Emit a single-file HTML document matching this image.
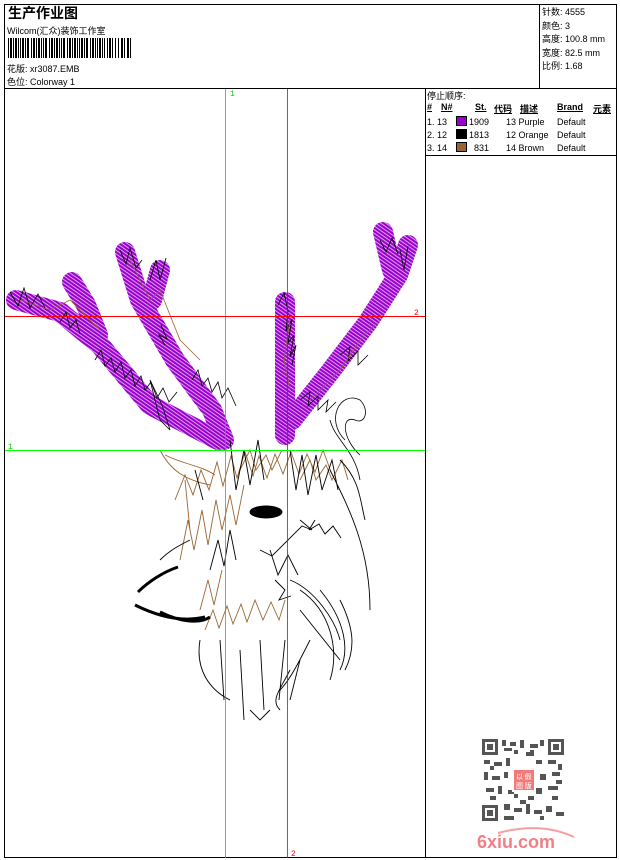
<!DOCTYPE html>
<html><head><meta charset="utf-8"><style>
html,body{margin:0;padding:0;background:#fff;width:620px;height:860px;overflow:hidden;font-family:"Liberation Sans","Noto Sans CJK SC",sans-serif;font-size:9px;color:#000}
.a{position:absolute;white-space:nowrap}
</style></head><body>
<svg width="620" height="860" style="position:absolute;left:0;top:0">
<defs>
<pattern id="h" width="3" height="3" patternUnits="userSpaceOnUse" patternTransform="rotate(35)">
<rect width="3" height="3" fill="#9b00d0"/><rect width="3" height="0.8" fill="#e9c8f5"/>
</pattern>
</defs>
<rect x="4.5" y="4.5" width="612" height="853" fill="none" stroke="#000"/>
<line x1="4" y1="88.5" x2="617" y2="88.5" stroke="#000"/>
<line x1="539.5" y1="4" x2="539.5" y2="88" stroke="#000"/>
<line x1="425.5" y1="88" x2="425.5" y2="858" stroke="#000"/>
<line x1="425" y1="155.5" x2="617" y2="155.5" stroke="#000"/>
<g fill="#000">
<rect x="8" y="38" width="1" height="20"/><rect x="10" y="38" width="2" height="20"/><rect x="13" y="38" width="1" height="20"/><rect x="15" y="38" width="2" height="20"/><rect x="18" y="38" width="1" height="20"/><rect x="20" y="38" width="1" height="20"/><rect x="22" y="38" width="2" height="20"/><rect x="25" y="38" width="1" height="20"/><rect x="27" y="38" width="2" height="20"/><rect x="31" y="38" width="1" height="20"/><rect x="33" y="38" width="2" height="20"/><rect x="36" y="38" width="1" height="20"/><rect x="38" y="38" width="2" height="20"/><rect x="41" y="38" width="1" height="20"/><rect x="43" y="38" width="1" height="20"/><rect x="45" y="38" width="2" height="20"/><rect x="49" y="38" width="1" height="20"/><rect x="51" y="38" width="2" height="20"/><rect x="54" y="38" width="1" height="20"/><rect x="56" y="38" width="2" height="20"/><rect x="59" y="38" width="1" height="20"/><rect x="61" y="38" width="1" height="20"/><rect x="63" y="38" width="2" height="20"/><rect x="67" y="38" width="1" height="20"/><rect x="69" y="38" width="2" height="20"/><rect x="72" y="38" width="1" height="20"/><rect x="74" y="38" width="2" height="20"/><rect x="77" y="38" width="1" height="20"/><rect x="79" y="38" width="1" height="20"/><rect x="81" y="38" width="2" height="20"/><rect x="84" y="38" width="1" height="20"/><rect x="86" y="38" width="2" height="20"/><rect x="90" y="38" width="1" height="20"/><rect x="92" y="38" width="2" height="20"/><rect x="95" y="38" width="1" height="20"/><rect x="97" y="38" width="1" height="20"/><rect x="99" y="38" width="2" height="20"/><rect x="102" y="38" width="1" height="20"/><rect x="104" y="38" width="1" height="20"/><rect x="107" y="38" width="1" height="20"/><rect x="109" y="38" width="2" height="20"/><rect x="112" y="38" width="1" height="20"/><rect x="115" y="38" width="1" height="20"/><rect x="118" y="38" width="1" height="20"/><rect x="121" y="38" width="2" height="20"/><rect x="124" y="38" width="1" height="20"/><rect x="127" y="38" width="2" height="20"/><rect x="130" y="38" width="1" height="20"/>
</g>
<rect x="456.5" y="116.5" width="10" height="9" fill="#9900cc" stroke="#000"/>
<rect x="456.5" y="129.5" width="10" height="9" fill="#000" stroke="#000"/>
<rect x="456.5" y="142.5" width="10" height="9" fill="#996633" stroke="#000"/>
<g stroke="url(#h)" stroke-linecap="round" stroke-linejoin="round" fill="none" stroke-width="20">
<polyline points="16,300 60,312 100,345 150,405 218,440"/>
<polyline points="72,282 86,305 98,335"/>
<polyline points="125,252 140,300 175,360 212,410 224,440"/>
<polyline points="160,270 152,300"/>
<polyline points="285,302 285,435"/>
<polyline points="292,420 330,372 368,322 398,275 408,245"/>
<polyline points="383,232 392,270"/>
</g>
<g stroke="#000" stroke-width="0.8" fill="none">
<path d="M10,292 l8,14 l6,-18 l6,20 l8,-14 l8,16 M60,322 l6,-10 l4,16 l6,-8 l4,14 M95,360 l6,-10 l4,16 l6,-8 l4,14 l6,-10 l4,16 l6,-8 l4,16 l6,-10 l4,14 l6,-8 l6,16 l6,-10 l6,14 l8,-10 M120,250 l6,14 l4,-16 l6,20 l6,-8 M150,280 l6,-20 l4,20 l6,-22 M165,345 l-6,-10 l8,4 l-6,-14 M192,380 l6,-10 l4,16 l6,-8 l4,14 l6,-10 l4,16 l6,-10 l8,18 M278,305 l6,-12 l4,18 l-2,20 l6,-12 l-4,24 l6,-8 l-4,22 l6,-12 l-4,20 M300,400 l10,-8 l-2,14 l10,-10 l0,14 l10,-10 l-2,12 l10,-10 M340,355 l10,-8 l-2,14 l10,-10 l0,14 l10,-10 M380,240 l6,12 l6,-14 l6,16 M400,250 l4,20 l4,-24"/>
<path stroke="#996633" d="M20,300 l30,10 l20,-10 l30,30 M130,260 l20,40 l10,-10 l20,50 l20,20 M290,320 l-6,40 l6,30 M310,400 l30,-30 l20,-30 l20,-20"/>
<path d="M150,380 l10,40 l10,10 l-8,-25 z"/>
<path d="M345,440 c-20,-20 -5,-50 15,-40 c10,10 5,25 -5,20 c-15,-5 -12,20 5,35 M330,420 c5,20 25,30 30,60"/>
</g>
<g fill="none" stroke-width="0.9">
<path stroke="#996633" d="M160,450 c10,20 25,30 50,35 M165,455 c20,10 35,10 50,20 M175,500 l10,-25 l8,20 l8,-25 l8,20 l8,-28 l6,24 l8,-30 l6,22 l8,-26 l8,24 l6,-20 l8,22 l8,-24 l8,20 l8,-22 l8,22 l8,-20 l8,18 l8,-22 l8,22 M185,480 l5,50 M180,560 l8,-40 l6,30 l8,-40 l6,35 l8,-45 l6,30 l8,-35 l6,30 l8,-40 M200,610 l8,-30 l6,25 l8,-35 M205,630 l8,-20 l6,18 l8,-22 l6,18 l8,-20 l6,18 l8,-22 l8,20 l8,-18 l8,18 l6,-20 M240,470 l10,-20 l6,20 l10,-15 l6,15 l10,-20 M300,480 l10,-20 l6,20 l10,-15 l6,15 l10,-20 l6,20"/>
<path stroke="#000" d="M195,470 l8,30 M230,440 l6,50 l8,-40 l6,35 l8,-45 l6,40 M290,450 l6,40 l6,-35 l6,40 l8,-40 l6,35 l10,-30 l6,30 M330,470 c20,40 40,80 40,140 M340,460 c20,20 20,40 25,60 M300,590 c30,20 40,60 30,90 M320,590 c25,30 30,60 20,80 M340,600 c15,30 15,50 5,70 M290,580 c25,10 45,40 50,60 M285,640 l-6,60 M260,640 l4,70 M240,650 l4,70 M220,640 l4,60 M200,640 c-5,30 10,50 30,60 M250,710 l10,10 l10,-10 M210,570 l8,-30 l6,26 l6,-36 l6,30 M160,560 c10,-10 20,-15 30,-20 M300,520 l12,10 l-10,-4 l-30,30 l-12,-6 M270,550 l8,25 l10,-20 l10,20 M315,520 l-6,10 l10,-6 l6,10 l8,-8 l8,12 M300,610 l40,50 M310,640 c-10,20 -20,40 -30,50 M275,580 l10,10 l-6,10 l12,-4 M290,670 c-10,20 -20,30 -10,40 M300,660 l-10,40"/>
<ellipse cx="266" cy="512" rx="16" ry="6" fill="#000" stroke="#000"/>
<path stroke="#000" stroke-width="3" d="M138,592 c10,-10 25,-20 40,-25 M135,605 c20,10 45,18 70,12 M160,612 c20,10 40,12 50,5"/>
</g>
<line x1="225.5" y1="89" x2="225.5" y2="858" stroke="#00dd00" stroke-width="1" opacity="0.8"/>
<line x1="287.5" y1="89" x2="287.5" y2="858" stroke="#ee0000" stroke-width="1" opacity="0.8"/>
<line x1="5" y1="316.5" x2="425" y2="316.5" stroke="#ff0000"/>
<line x1="5" y1="450.5" x2="425" y2="450.5" stroke="#00ff00"/>
<text x="230" y="96" fill="#00cc00" font-size="8" font-family="Liberation Mono">1</text>
<text x="8" y="449" fill="#00cc00" font-size="8" font-family="Liberation Mono">1</text>
<text x="414" y="315" fill="#ff0000" font-size="8" font-family="Liberation Mono">2</text>
<text x="291" y="856" fill="#ff0000" font-size="8" font-family="Liberation Mono">2</text>
<g fill="#555">
<rect x="482" y="739" width="16" height="16"/><rect x="485" y="742" width="10" height="10" fill="#fff"/><rect x="487" y="744" width="6" height="6"/>
<rect x="548" y="739" width="16" height="16"/><rect x="551" y="742" width="10" height="10" fill="#fff"/><rect x="553" y="744" width="6" height="6"/>
<rect x="482" y="805" width="16" height="16"/><rect x="485" y="808" width="10" height="10" fill="#fff"/><rect x="487" y="810" width="6" height="6"/>
<rect x="502" y="740" width="4" height="6"/><rect x="510" y="742" width="6" height="4"/><rect x="520" y="740" width="4" height="8"/><rect x="530" y="744" width="8" height="4"/><rect x="540" y="740" width="4" height="6"/><rect x="504" y="748" width="8" height="3"/><rect x="530" y="750" width="4" height="6"/>
<rect x="484" y="760" width="6" height="4"/><rect x="494" y="762" width="8" height="4"/><rect x="506" y="758" width="4" height="8"/><rect x="536" y="760" width="6" height="4"/><rect x="548" y="760" width="8" height="4"/><rect x="558" y="764" width="4" height="6"/><rect x="490" y="766" width="4" height="4"/>
<rect x="484" y="772" width="4" height="8"/><rect x="492" y="776" width="8" height="4"/><rect x="504" y="772" width="4" height="6"/><rect x="540" y="774" width="6" height="6"/><rect x="552" y="772" width="8" height="4"/><rect x="556" y="780" width="6" height="4"/>
<rect x="486" y="788" width="8" height="4"/><rect x="498" y="786" width="4" height="8"/><rect x="508" y="790" width="6" height="4"/><rect x="536" y="788" width="6" height="6"/><rect x="548" y="786" width="10" height="4"/><rect x="490" y="796" width="6" height="4"/><rect x="552" y="796" width="6" height="4"/>
<rect x="504" y="804" width="6" height="6"/><rect x="514" y="808" width="8" height="4"/><rect x="526" y="804" width="4" height="10"/><rect x="534" y="810" width="8" height="4"/><rect x="546" y="806" width="6" height="6"/><rect x="556" y="812" width="8" height="4"/><rect x="504" y="816" width="10" height="4"/><rect x="540" y="816" width="4" height="4"/>
<rect x="514" y="750" width="4" height="4"/><rect x="526" y="752" width="6" height="4"/><rect x="514" y="794" width="4" height="4"/><rect x="528" y="796" width="6" height="4"/><rect x="520" y="800" width="6" height="4"/>
</g>
<rect x="512" y="768" width="24" height="24" fill="#fff"/>
<rect x="514" y="770" width="20" height="20" fill="#f47a7a"/>
<text x="516" y="779" fill="#fff" font-size="7" font-family="Noto Sans CJK SC">以 假</text>
<text x="516" y="788" fill="#fff" font-size="7" font-family="Noto Sans CJK SC">图 版</text>
<path d="M498,833 c30,-8 55,-6 76,4" fill="none" stroke="#f4a0a0" stroke-width="2"/>
<text x="477" y="848" fill="#f07f86" font-size="18" font-weight="bold" font-family="Liberation Sans">6xiu.com</text>
</svg>
<div class="a" style="left:8px;top:3px;font-size:14px;font-weight:bold;font-family:'Noto Sans CJK SC',sans-serif">生产作业图</div>
<div class="a" style="left:7px;top:24px">Wilcom(汇众)装饰工作室</div>
<div class="a" style="left:7px;top:62px">花版: xr3087.EMB</div>
<div class="a" style="left:7px;top:75px">色位: Colorway 1</div>
<div class="a" style="left:542px;top:6px;line-height:13.5px">针数: 4555<br>颜色: 3<br>高度: 100.8 mm<br>宽度: 82.5 mm<br>比例: 1.68</div>
<div class="a" style="left:427px;top:89px">停止顺序:</div>
<div class="a" style="left:427px;top:102px;font-weight:bold;text-decoration:underline">#</div>
<div class="a" style="left:441px;top:102px;font-weight:bold;text-decoration:underline">N#</div>
<div class="a" style="left:475px;top:102px;font-weight:bold;text-decoration:underline">St.</div>
<div class="a" style="left:494px;top:102px;font-weight:bold;text-decoration:underline">代码</div>
<div class="a" style="left:520px;top:102px;font-weight:bold;text-decoration:underline">描述</div>
<div class="a" style="left:557px;top:102px;font-weight:bold;text-decoration:underline">Brand</div>
<div class="a" style="left:593px;top:102px;font-weight:bold;text-decoration:underline">元素</div>
<div class="a" style="left:427px;top:116px;line-height:13px">1. 13<br>2. 12<br>3. 14</div>
<div class="a" style="left:469px;top:116px;line-height:13px">1909<br>1813<br>&nbsp;&nbsp;831</div>
<div class="a" style="left:506px;top:116px;line-height:13px">13 Purple<br>12 Orange<br>14 Brown</div>
<div class="a" style="left:557px;top:116px;line-height:13px">Default<br>Default<br>Default</div>
</body></html>
